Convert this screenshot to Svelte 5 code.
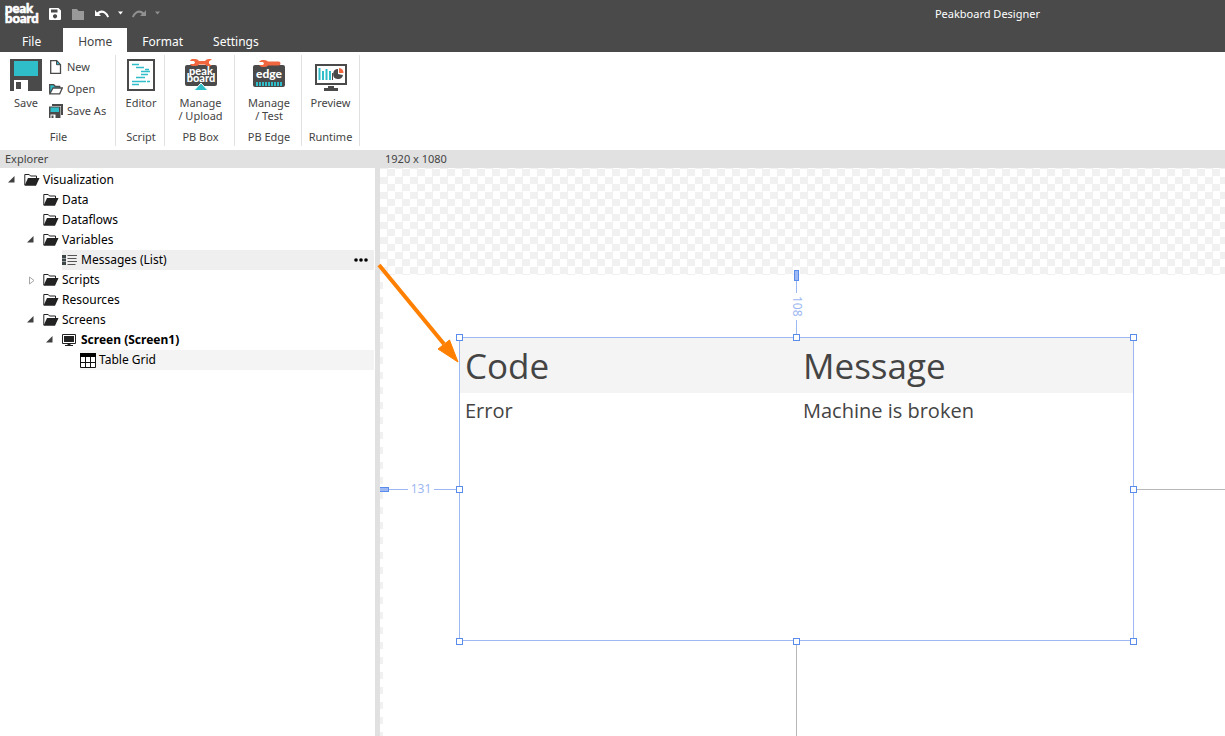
<script>
  const folders = [
    { label: 'Visualization', level: 0, state: 'open', icon: 'folder' },
    { label: 'Data', level: 1, icon: 'folder' },
    { label: 'Dataflows', level: 1, icon: 'folder' },
    { label: 'Variables', level: 1, state: 'open', icon: 'folder' },
    { label: 'Messages (List)', level: 2, icon: 'list', selected: true, menu: true },
    { label: 'Scripts', level: 1, state: 'closed', icon: 'folder' },
    { label: 'Resources', level: 1, icon: 'folder' },
    { label: 'Screens', level: 1, state: 'open', icon: 'folder' },
    { label: 'Screen (Screen1)', level: 2, state: 'open', icon: 'screen', bold: true },
    { label: 'Table Grid', level: 3, icon: 'table', soft: true }
  ];
  const tabs = ['File', 'Home', 'Format', 'Settings'];
  const handles = ['nw', 'n', 'ne', 'w', 'e', 'sw', 's', 'se'];
  const rows = [{ code: 'Error', message: 'Machine is broken' }];
</script>

<div class="app">
  <header>
    <div class="titlebar">
      <svg class="logo" width="36" height="24" viewBox="0 0 36 24" role="img" aria-label="Peakboard">
        <text x="0" y="11">peak</text>
        <text x="0" y="21">board</text>
      </svg>
      <button class="quick" aria-label="Save">
        <svg width="12" height="12" viewBox="0 0 12 12"><path fill="#fff" fill-rule="evenodd" d="M1 0h8.500L12 2.500V11q0 1-1 1H1q-1 0-1-1V1q0-1 1-1zM2 1.500V4.500H8.500V1.500zM6 6.200a2.100 2.100 0 1 0 .1 0z" /></svg>
      </button>
      <button class="quick" aria-label="Open">
        <svg width="12" height="12" viewBox="0 0 12 12"><path fill="#999" d="M0 1h5l1.500 2H12v9H0z" /></svg>
      </button>
      <button class="quick undo" aria-label="Undo">
        <svg width="14" height="10" viewBox="0 0 14 10"><path fill="#fff" d="M0 1l2 2.500Q6 0 10 2.500q3 2 4 5.300l-1.600.6Q11 5.500 9 4.200 6.500 2.800 4 5l2 2H0z" /></svg>
      </button>
      <button class="quick" aria-label="Undo history">
        <svg width="5" height="12" viewBox="0 0 5 12"><path fill="#fff" d="M0 3.500h5L2.500 6.500z" /></svg>
      </button>
      <button class="quick redo" aria-label="Redo">
        <svg width="14" height="10" viewBox="0 0 14 10"><path fill="#909090" d="M14 1l-2 2.500Q8 0 4 2.500 1 4.500 0 7.800l1.600.6Q3 5.500 5 4.200 7.500 2.800 10 5L8 7h6z" /></svg>
      </button>
      <button class="quick" aria-label="Redo history">
        <svg width="5" height="12" viewBox="0 0 5 12"><path fill="#909090" d="M0 3.500h5L2.500 6.500z" /></svg>
      </button>
      <span class="title">Peakboard Designer</span>
    </div>
    <nav>
      {#each tabs as tab}
        <button class="tab" class:active={tab === 'Home'}>{tab}</button>
      {/each}
    </nav>
  </header>

  <div class="ribbon">
    <section class="group file">
      <div class="tools">
        <button class="tool">
          <svg width="32" height="32" viewBox="0 0 32 32"><path fill="#4a4a4a" d="M0 0h32v32H0z" /><path fill="#2fbdc9" d="M4 2h24v15H4z" /><path fill="#fff" d="M4 21h14v11H4z" /><path fill="#4a4a4a" d="M6 23h5v7H6z" /></svg>
          <span>Save</span>
        </button>
        <div class="stack">
          <button class="mini">
            <svg width="14" height="16" viewBox="0 0 14 16"><path fill="#fff" stroke="#4a4a4a" stroke-width="1.300" d="M1.700 1.700h6l3.800 4v8.700H1.700z" /><path fill="#2fbdc9" stroke="#4a4a4a" d="M7.500 1.700v4h4z" /></svg>
            <span>New</span>
          </button>
          <button class="mini">
            <svg width="14" height="16" viewBox="0 0 14 16"><path fill="#2fbdc9" stroke="#4a4a4a" stroke-width="1.300" d="M.7 12.500V3.700h4l1.500 1.600h4.500v2" /><path fill="#fff" stroke="#4a4a4a" stroke-width="1.300" d="M.9 12.800L4 7h9.300l-2.600 5.800z" /></svg>
            <span>Open</span>
          </button>
          <button class="mini">
            <svg width="14" height="16" viewBox="0 0 14 16"><path fill="#4a4a4a" d="M3 1h11v11h-2V3H3z" /><path fill="#4a4a4a" d="M0 3.500h11.500V15H0z" /><path fill="#2fbdc9" d="M1.500 4.500H10V9H1.500z" /><path fill="#fff" d="M1.500 11.500h5V15h-5z" /><path fill="#4a4a4a" d="M2.500 12.500h2V15h-2z" /></svg>
            <span>Save As</span>
          </button>
        </div>
      </div>
      <h2>File</h2>
    </section>

    <section class="group script">
      <div class="tools">
        <button class="tool">
          <svg width="28" height="32" viewBox="0 0 28 32"><path fill="#fff" stroke="#4a4a4a" stroke-width="2" d="M1 1h26v30H1z" /><path stroke="#2fbdc9" stroke-width="1.500" d="M5 5.500h7M9 8.500h8M14 12.500h9M18 10.500h4M14 15.500h7M9 18.500h9M5 22.500h7M11 22.500h8M20 22.500h3M5 25.500h7" /></svg>
          <span>Editor</span>
        </button>
      </div>
      <h2>Script</h2>
    </section>

    <section class="group box">
      <div class="tools">
        <button class="tool">
          <svg width="32" height="32" viewBox="0 0 32 32"><rect y="6" width="32" height="21" rx="2" fill="#4a4a4a" /><path fill="#f0673f" d="M7 0h3q3 0 4 2h6q1-2 4-2h3l-3 2.500v2L27 7h-3q-3 0-4-1.500h-6Q13 7 10 7H7q-1.500-.5-2-2h4l1-1.500L9 2H5q.5-1.500 2-2z" /><text class="badge" x="16" y="15.500">peak</text><text class="badge" x="16" y="23">board</text><path fill="#2fbdc9" stroke="#fff" d="M16 24l7 7.500H9z" /></svg>
          <span>Manage<br />/ Upload</span>
        </button>
      </div>
      <h2>PB Box</h2>
    </section>

    <section class="group edge">
      <div class="tools">
        <button class="tool">
          <svg width="32" height="32" viewBox="0 0 32 32"><rect y="6" width="32" height="22" rx="2" fill="#4a4a4a" /><path fill="#f0673f" d="M9 1h2q3 0 4 1.500h11q1.500.5 1.500 2t-1.500 2H15Q14 8 11 8H9q-2-.5-3-2h4l1-1.500L10 3H6q1-1.500 3-2z" /><text class="badge wide" x="16" y="18.500">edge</text><path stroke="#2fbdc9" stroke-width="4" stroke-dasharray="2 1" d="M3 25h26" /></svg>
          <span>Manage<br />/ Test</span>
        </button>
      </div>
      <h2>PB Edge</h2>
    </section>

    <section class="group runtime">
      <div class="tools">
        <button class="tool">
          <svg width="32" height="32" viewBox="0 0 32 32"><path fill="#fff" stroke="#4a4a4a" stroke-width="2" d="M1 6h30v19H1z" /><path stroke="#2fbdc9" stroke-width="2" d="M4.500 9v12M8 12v9M11.500 10v11M15 12v9" /><path stroke="#4a4a4a" d="M17.500 14v7" /><path fill="#4a4a4a" d="M23 10a5 5 0 1 0 5 6l-5-1z" /><path fill="#f0673f" d="M24 9a5 5 0 0 1 4.500 5H24z" /><path fill="#4a4a4a" d="M13 27h6v2h4v3H9v-3h4z" /></svg>
          <span>Preview</span>
        </button>
      </div>
      <h2>Runtime</h2>
    </section>
  </div>

  <main>
    <aside>
      <h2 class="bar">Explorer</h2>
      <ul class="tree">
        {#each folders as f}
          <li class="level{f.level}">
            <span class="twist">
              {#if f.state === 'open'}
                <svg width="7" height="9" viewBox="0 0 7 9"><path fill="#404040" d="M6.500 0v6.500H0z" /></svg>
              {:else if f.state === 'closed'}
                <svg width="8" height="9" viewBox="0 0 8 9"><path fill="#fff" stroke="#a6a6a6" d="M2.500 1v7L7 4.500z" /></svg>
              {/if}
            </span>
            <div class="node" class:selected={f.selected} class:soft={f.soft} class:bold={f.bold}>
              {#if f.icon === 'folder'}
                <svg width="16" height="14" viewBox="0 0 16 14"><path fill="#fff" stroke="#222" d="M.8 12V1.500h4.400L6.500 3h6v2" /><path fill="#222" d="M.5 12.800L4 5h11.500L12 12.800z" /></svg>
              {:else if f.icon === 'list'}
                <svg width="16" height="14" viewBox="0 0 16 14"><path fill="#3c4646" d="M0 2h4v3H0zM0 5.500h4v3H0zM0 9h4v3H0z" /><path stroke="#555" d="M5.500 2.500H15M5.500 5.500h9M5.500 8.500H15M5.500 11.500h8" /></svg>
              {:else if f.icon === 'screen'}
                <svg width="16" height="14" viewBox="0 0 16 14"><path fill="#fff" stroke="#222" d="M.5 1.500h13v9H.5z" /><path fill="#222" d="M2 3h10v6H2zM5.500 11h3v1H11v1H3v-1h2.500z" /></svg>
              {:else}
                <svg width="16" height="15" viewBox="0 0 16 15"><path fill="#fff" stroke="#111" d="M.5.5h15v14H.5zM.5 9.500h15M5.500 3v12M10.500 3v12" /><path d="M0 0h16v4H0z" /></svg>
              {/if}
              <span>{f.label}</span>
              {#if f.menu}
                <button class="more" aria-label="More actions">
                  <svg width="14" height="4" viewBox="0 0 14 4"><circle cx="2" cy="2" r="1.800" /><circle cx="7" cy="2" r="1.800" /><circle cx="12" cy="2" r="1.800" /></svg>
                </button>
              {/if}
            </div>
          </li>
        {/each}
      </ul>
    </aside>

    <section class="workspace">
      <h2 class="bar">1920 x 1080</h2>
      <div class="canvas">
        <div class="page"></div>
        <div class="guide top"><span>108</span></div>
        <div class="guide left"><span>131</span></div>
        <div class="guide right"></div>
        <div class="guide bottom"></div>
        <div class="widget">
          <table>
            <thead><tr><th>Code</th><th>Message</th></tr></thead>
            <tbody>
              {#each rows as row}
                <tr><td>{row.code}</td><td>{row.message}</td></tr>
              {/each}
            </tbody>
          </table>
          <div class="handles">
            {#each handles as h}
              <i class="handle {h}"></i>
            {/each}
          </div>
        </div>
        <svg class="arrow" width="84" height="102" viewBox="0 0 84 102"><path fill="none" stroke="#ff8000" stroke-width="4" d="M3 2L68 81" /><path fill="#ff8000" d="M82 99L62 86 73.500 77z" stroke="#ff8000" /></svg>
      </div>
    </section>
  </main>
</div>

<style>
  :global(body) { margin: 0; }
  .app {
    display: flex;
    flex-direction: column;
    min-height: 100vh;
    font: 12px/16px "Noto Sans", sans-serif;
    color: #444;
    background: #fff;
  }
  button { font: inherit; color: inherit; background: none; border: 0; padding: 0; margin: 0; }
  svg { display: block; flex: none; }
  h2 { margin: 0; font-size: 11px; font-weight: 400; }
  header { background: #4a4a4a; color: #fff; }
  .titlebar { display: flex; align-items: center; height: 28px; padding-left: 5px; }
  .logo { margin-right: 8px; overflow: visible; fill: #fff; stroke: #fff; stroke-width: 0.6px; font: 900 13px Lato, sans-serif; }
  .quick { margin-right: 11px; }
  .quick + .quick + .quick { margin-right: 9px; }
  .quick.undo, .quick.redo { margin-right: 8px; }
  .title { margin-left: auto; margin-right: 185px; font-size: 11px; }
  nav { display: flex; padding-left: 7px; height: 24px; }
  .tab { padding: 4px 15px 0; }
  .tab:first-child { margin-right: 7px; }
  .active { background: #fff; color: #444; }

  .ribbon { display: flex; padding: 3px 0 4px; font-size: 11px; }
  .group { display: flex; flex-direction: column; justify-content: space-between; height: 91px; padding-left: 2px; border-right: 1px solid #e1e1e1; text-align: center; box-sizing: border-box; }
  .group h2 { line-height: 18px; }
  .file { width: 116px; }
  .script { width: 49px; }
  .box { width: 70px; }
  .edge { width: 67px; }
  .runtime { width: 58px; padding-left: 0; }
  .tools { display: flex; justify-content: center; }
  .file .tools { justify-content: flex-start; padding-left: 8px; }
  .tool { display: flex; flex-direction: column; align-items: center; gap: 5px; padding-top: 4px; line-height: 13px; }
  .badge { fill: #fff; font: 900 11px Lato, sans-serif; text-anchor: middle; }
  .wide { font-size: 12px; }
  .stack { margin-left: 7px; padding-top: 1px; }
  .mini { display: flex; align-items: center; gap: 4px; height: 22px; white-space: nowrap; }

  main { display: flex; flex: 1; }
  .bar { height: 18px; line-height: 18px; padding-left: 5px; background: #e1e1e1; }
  aside { width: 375px; flex: none; }
  .tree { list-style: none; margin: 0; padding: 2px 0; color: #000; }
  li { display: flex; align-items: center; height: 20px; margin-right: 1px; }
  .twist { width: 16px; padding-left: 8px; }
  .level1 { padding-left: 19px; }
  .level2 { padding-left: 38px; }
  .level3 { padding-left: 56px; }
  .node { display: flex; flex: 1; align-items: center; gap: 3px; height: 20px; line-height: 18px; }
  .selected { background: #efefef; }
  .soft { background: #f4f4f4; }
  .bold { font-weight: 700; }
  .more { margin-left: auto; margin-right: 6px; }

  .workspace { display: flex; flex-direction: column; flex: 1; min-width: 0; border-left: 5px solid #e1e1e1; }
  .canvas {
    position: relative;
    flex: 1;
    background: repeating-conic-gradient(#f1f1f1 0 25%, #fff 0 50%) 0 1px / 15px 15px;
  }
  .page { position: absolute; inset: 107px 0 0 3px; background: #fff; }
  .widget { position: absolute; left: 79px; top: 169px; width: 673px; height: 302px; border: 1px solid #9db8f2; }
  table { width: 100%; border-collapse: collapse; table-layout: fixed; text-align: left; }
  th { height: 55px; padding: 0 5px; background: #f4f4f4; font: 400 35px/48px "Open Sans", sans-serif; }
  th:first-child { width: 328px; }
  td { height: 36px; padding: 0 5px; font: 20px/28px "Open Sans", sans-serif; }
  .handles { position: absolute; inset: -1px -1px -2px; }
  .handle { position: absolute; width: 5px; height: 5px; border: 1px solid #5a8ceb; background: #fff; margin: auto; }
  .nw, .n, .ne { top: -3px; }
  .w, .e { top: 0; bottom: 0; }
  .sw, .s, .se { bottom: -3px; }
  .nw, .w, .sw { left: -3px; }
  .n, .s { left: 0; right: 0; }
  .ne, .e, .se { right: -3px; }
  .guide { position: absolute; color: #9db8f2; line-height: 12px; font-size: 12px; display: flex; align-items: center; justify-content: center; }
  .guide span { background: #fff; }
  .top { left: 411px; top: 102px; width: 11px; height: 67px; padding-top: 6px; box-sizing: border-box; background: linear-gradient(#9db8f2, #9db8f2) 5px 0 / 1px 100% no-repeat; }
  .top span { writing-mode: vertical-rl; padding: 3px 0; }
  .top::before { content: ""; position: absolute; left: 3px; top: 0; width: 3px; height: 9px; border: 1px solid #5a8ceb; background: #9db8f2; }
  .left { left: 0; top: 315px; width: 79px; height: 12px; padding-left: 3px; box-sizing: border-box; background: linear-gradient(#9db8f2, #9db8f2) 0 6px / 100% 1px no-repeat; }
  .left span { padding: 0 3px; }
  .left::before { content: ""; position: absolute; left: 0; top: 4px; width: 8px; height: 3px; border: 1px solid #5a8ceb; border-left: 0; background: #9db8f2; }
  .right { left: 754px; right: 0; top: 321px; height: 1px; background: #b8b8b8; }
  .bottom { left: 416px; top: 473px; bottom: 0; width: 1px; background: #b8b8b8; }
  .arrow { position: absolute; left: -4px; top: 95px; }
</style>
